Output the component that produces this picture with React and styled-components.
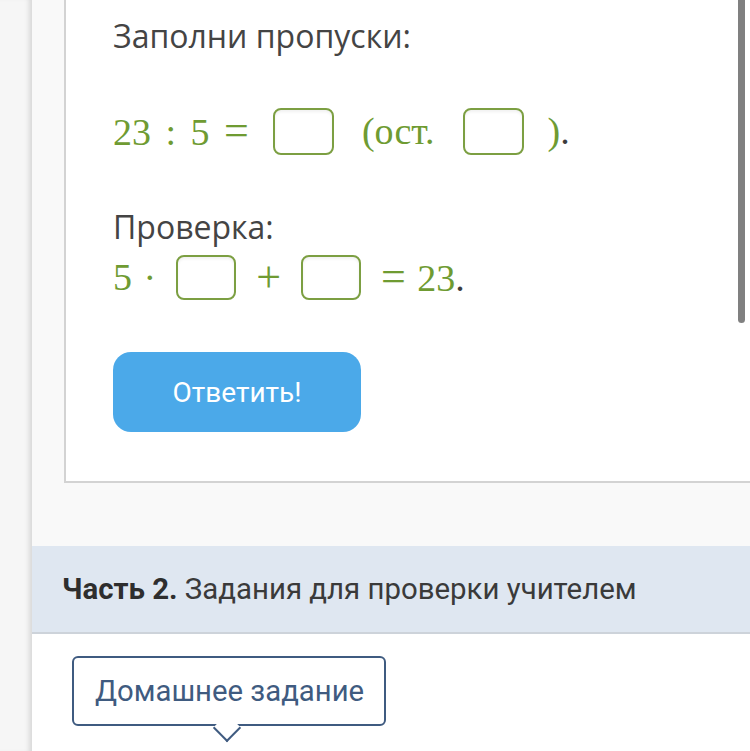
import React from "react";
import styled, { createGlobalStyle } from "styled-components";

const GlobalStyle = createGlobalStyle`
  html, body {
    margin: 0;
    padding: 0;
    background: #ffffff;
    overflow: hidden;
  }
  #root {
    width: 750px;
    height: 751px;
  }
`;

const Page = styled.div`
  display: flex;
  width: 750px;
  height: 751px;
  overflow: hidden;
  position: relative;
`;

const LeftRail = styled.div`
  width: 32px;
  flex-shrink: 0;
  background: #f6f6f6;
  box-shadow: inset -6px 0 5px -3px rgba(0, 0, 0, 0.12);
`;

const Main = styled.div`
  flex: 1;
  display: flex;
  flex-direction: column;
  background: #f9f9f9;
`;

const TaskArea = styled.div`
  padding: 0 0 63px 32px;
`;

const TaskCard = styled.div`
  display: flex;
  flex-direction: column;
  align-items: flex-start;
  gap: 52px;
  background: #ffffff;
  border-left: 2px solid #d3d3d3;
  border-bottom: 2px solid #d3d3d3;
  padding: 16px 0 49px 47px;
`;

const CheckBlock = styled.div`
  display: flex;
  flex-direction: column;
  gap: 8px;
`;

const Prompt = styled.div`
  font-family: "Open Sans", sans-serif;
  font-size: 32px;
  line-height: 40px;
  color: #444444;
`;

const MathRow = styled.div`
  display: flex;
  align-items: center;
  gap: ${(p) => (p.$tight ? 20 : 24)}px;
  font-family: "Liberation Serif", "Times New Roman", serif;
  font-size: 38px;
  line-height: 41px;
  word-spacing: ${(p) => (p.$tight ? 2 : 5)}px;
  color: #6f9b32;
  white-space: pre;
`;

const Expr = styled.span`
  padding: 0 ${(p) => (p.$pad ? 4 : 0)}px;
`;

const Op = styled.span`
  font-size: 44px;
  line-height: 41px;
`;

const Period = styled.span`
  color: #3c3c3c;
`;

const Blank = styled.span`
  display: inline-block;
  flex-shrink: 0;
  box-sizing: border-box;
  width: ${(p) => (p.$small ? 60 : 61)}px;
  height: ${(p) => (p.$small ? 45 : 47)}px;
  border: 2px solid #7c9f42;
  border-radius: 8px;
  background: #ffffff;
  box-shadow: inset 0 2px 3px rgba(0, 0, 0, 0.06);
`;

const AnswerButton = styled.button`
  width: 248px;
  height: 80px;
  border: none;
  border-radius: 18px;
  background: #4ba9e9;
  color: #ffffff;
  font-family: Roboto, "Open Sans", sans-serif;
  font-size: 28px;
  cursor: pointer;
`;

const SectionBand = styled.div`
  height: 86px;
  background: #dfe7f1;
  border-bottom: 2px solid #cdd3da;
  display: flex;
  align-items: center;
  padding-left: 30px;
  font-family: Roboto, "Open Sans", sans-serif;
  font-size: 29.4px;
  color: #3a3a3a;
  white-space: nowrap;
`;

const Strong = styled.b`
  font-weight: 700;
  color: #2e2e2e;
`;

const Lower = styled.div`
  flex: 1;
  background: #ffffff;
  padding: 22px 0 0 40px;
`;

const Tab = styled.div`
  position: relative;
  display: inline-flex;
  align-items: center;
  box-sizing: border-box;
  height: 70px;
  padding: 0 20px 0 21px;
  border: 2px solid #3f5b80;
  border-radius: 6px;
  background: #ffffff;
  color: #3f5b80;
  font-family: Roboto, "Open Sans", sans-serif;
  font-size: 29.3px;

  &::after {
    content: "";
    position: absolute;
    left: 50%;
    bottom: -14px;
    width: 18px;
    height: 18px;
    margin-left: -12px;
    background: #ffffff;
    border-right: 2px solid #3f5b80;
    border-bottom: 2px solid #3f5b80;
    transform: rotate(45deg);
  }
`;

const Scrollbar = styled.div`
  position: absolute;
  right: 5px;
  top: 0;
  width: 7px;
  height: 323px;
  border-radius: 0 0 4px 4px;
  background: #808080;
`;

export default function App() {
  return (
    <>
      <GlobalStyle />
      <Page>
        <LeftRail />
        <Main>
          <TaskArea>
            <TaskCard>
              <Prompt>Заполни пропуски:</Prompt>
              <MathRow>
                <Expr>
                  23 : 5 <Op>=</Op>
                </Expr>
                <Blank />
                <Expr $pad>(ост.</Expr>
                <Blank />
                <Expr>
                  )<Period>.</Period>
                </Expr>
              </MathRow>
              <CheckBlock>
                <Prompt>Проверка:</Prompt>
                <MathRow $tight>
                  <Expr>5 ·</Expr>
                  <Blank $small />
                  <Op>+</Op>
                  <Blank $small />
                  <Expr>
                    <Op>=</Op> 23<Period>.</Period>
                  </Expr>
                </MathRow>
              </CheckBlock>
              <AnswerButton>Ответить!</AnswerButton>
            </TaskCard>
          </TaskArea>
          <SectionBand>
            <Strong>Часть 2.</Strong>&nbsp;Задания для проверки учителем
          </SectionBand>
          <Lower>
            <Tab>Домашнее задание</Tab>
          </Lower>
        </Main>
        <Scrollbar />
      </Page>
    </>
  );
}
